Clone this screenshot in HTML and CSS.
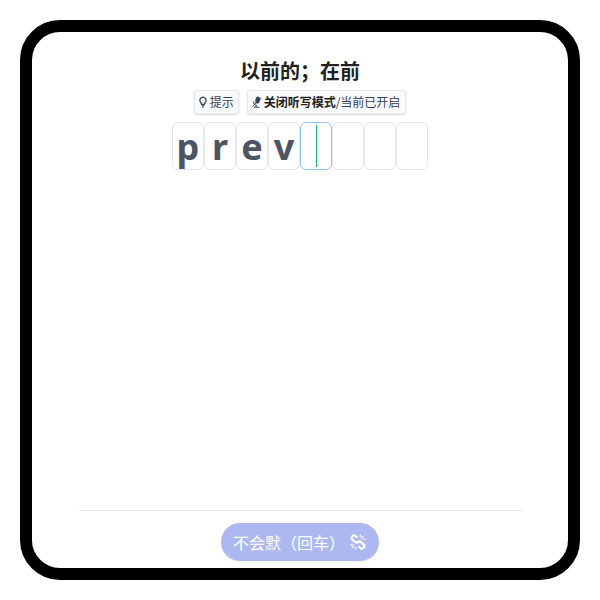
FILE: index.html
```html
<!DOCTYPE html>
<html lang="zh">
<head>
<meta charset="utf-8">
<title>听写</title>
<link rel="stylesheet" href="styles.css">
</head>
<body>
<main class="frame">
  <section class="top">
    <h1 class="title">以前的；在前</h1>
    <div class="tools">
      <button class="tool">
        <svg class="ico" viewBox="0 0 10 12"><path d="M5 1.200a3.200 3.200 0 0 0-2.100 5.600c.4.400.6 1 .7 1.600h2.800c.1-.6.3-1.200.7-1.600A3.200 3.200 0 0 0 5 1.200z" fill="none" stroke="currentColor" stroke-width="1.300"/><path d="M3.700 9.800h2.600M4.200 11h1.600" stroke="currentColor" stroke-width="1.100"/></svg>
        <span>提示</span>
      </button>
      <button class="tool tool-wide">
        <svg class="ico" viewBox="0 0 10 12"><rect x="3.500" y="0.600" width="4.400" height="7" rx="2.200" transform="rotate(14 5.700 4)" fill="currentColor"/><path d="M1.500 5.500c0 2.300 1.300 3.800 3.300 3.800M4 9.300v1.700M1.600 11.200h6M.5 10.300 9.500 2.200" fill="none" stroke="currentColor" stroke-width="1"/></svg>
        <span><b class="strong">关闭听写模式</b>/当前已开启</span>
      </button>
    </div>
    <div class="cells">
      <div class="cell">p</div>
      <div class="cell">r</div>
      <div class="cell">e</div>
      <div class="cell">v</div>
      <div class="cell cell-active"><i class="caret"></i></div>
      <div class="cell"></div>
      <div class="cell"></div>
      <div class="cell"></div>
    </div>
  </section>
  <footer class="foot">
    <button class="skip">
      <span>不会默（回车）</span>
      <svg class="link" viewBox="0 0 16 16"><path d="M7 3.600 5.600 2.500a2.200 2.200 0 0 0-3 3l2.600 2.300a2 2 0 0 0 2.800 0M9 12.400l1.400 1.100a2.200 2.200 0 0 0 3-3L10.800 8.200a2 2 0 0 0-2.800 0" fill="none" stroke="currentColor" stroke-width="2" stroke-linecap="round"/><path d="M10 1.500v2M12.500 3l-1.300 1.300M14.500 5.500h-2M1.500 10.500h2M3 13l1.300-1.300M6 14.500v-2" stroke="currentColor" stroke-width="1" stroke-linecap="round"/></svg>
    </button>
  </footer>
</main>
</body>
</html>
```
FILE: styles.css
```css
* { box-sizing: border-box; }
html, body { margin: 0; height: 100%; background: #fff; }
body {
  padding: 20px;
  font-family: "Noto Sans", "Noto Sans CJK SC", sans-serif;
  color: #333;
}
.frame {
  width: 560px;
  height: 560px;
  border: 12px solid #000;
  border-radius: 40px;
  background: #fff;
  display: flex;
  flex-direction: column;
  justify-content: space-between;
  align-items: center;
}
.top {
  display: flex;
  flex-direction: column;
  align-items: center;
  padding-top: 24px;
}
.title {
  margin: 0;
  font: 700 20px/30px "Noto Sans CJK SC", sans-serif;
  color: #222;
}
.tools {
  display: flex;
  gap: 8px;
  margin-top: 4px;
}
.tool {
  display: flex;
  align-items: center;
  gap: 2px;
  height: 24px;
  padding: 0 4px 0 3px;
  border: 1px solid #e5e7eb;
  border-radius: 3px;
  background: #f9fafb;
  box-shadow: 0 1px 2px rgba(0, 0, 0, .14);
  font: 400 12px/16px "Noto Sans CJK SC", sans-serif;
  color: #374151;
}
.tool-wide { padding: 0 5px 0 4px; }
.strong { font-weight: 700; color: #222; }
.ico { width: 10px; height: 12px; flex: none; }
.cells {
  display: flex;
  margin-top: 8px;
}
.cell {
  width: 32px;
  height: 48px;
  border: 1px solid #e5e7eb;
  border-radius: 6px;
  display: flex;
  align-items: center;
  justify-content: center;
  padding-top: 2px;
  font: 700 36px/1 "Noto Sans", sans-serif;
  color: #4b5563;
}
.cell-active { border-color: #93c5fd; padding-top: 0; }
.caret {
  display: block;
  width: 1px;
  height: 42px;
  background: #10b96a;
}
.foot {
  width: 443px;
  height: 46px;
  border-top: 1px solid #e5e7eb;
  margin-bottom: 12px;
  padding-top: 12px;
  display: flex;
  justify-content: center;
}
.skip {
  display: flex;
  align-items: center;
  justify-content: center;
  gap: 4px;
  width: 158px;
  height: 38px;
  padding: 0;
  border: 0;
  border-radius: 19px;
  background: #adb8f0;
  box-shadow: 0 1px 3px rgba(0, 0, 0, .08);
  font: 400 16px/20px "Noto Sans CJK SC", sans-serif;
  color: #fff;
}
.link { width: 18px; height: 18px; flex: none; }
```
